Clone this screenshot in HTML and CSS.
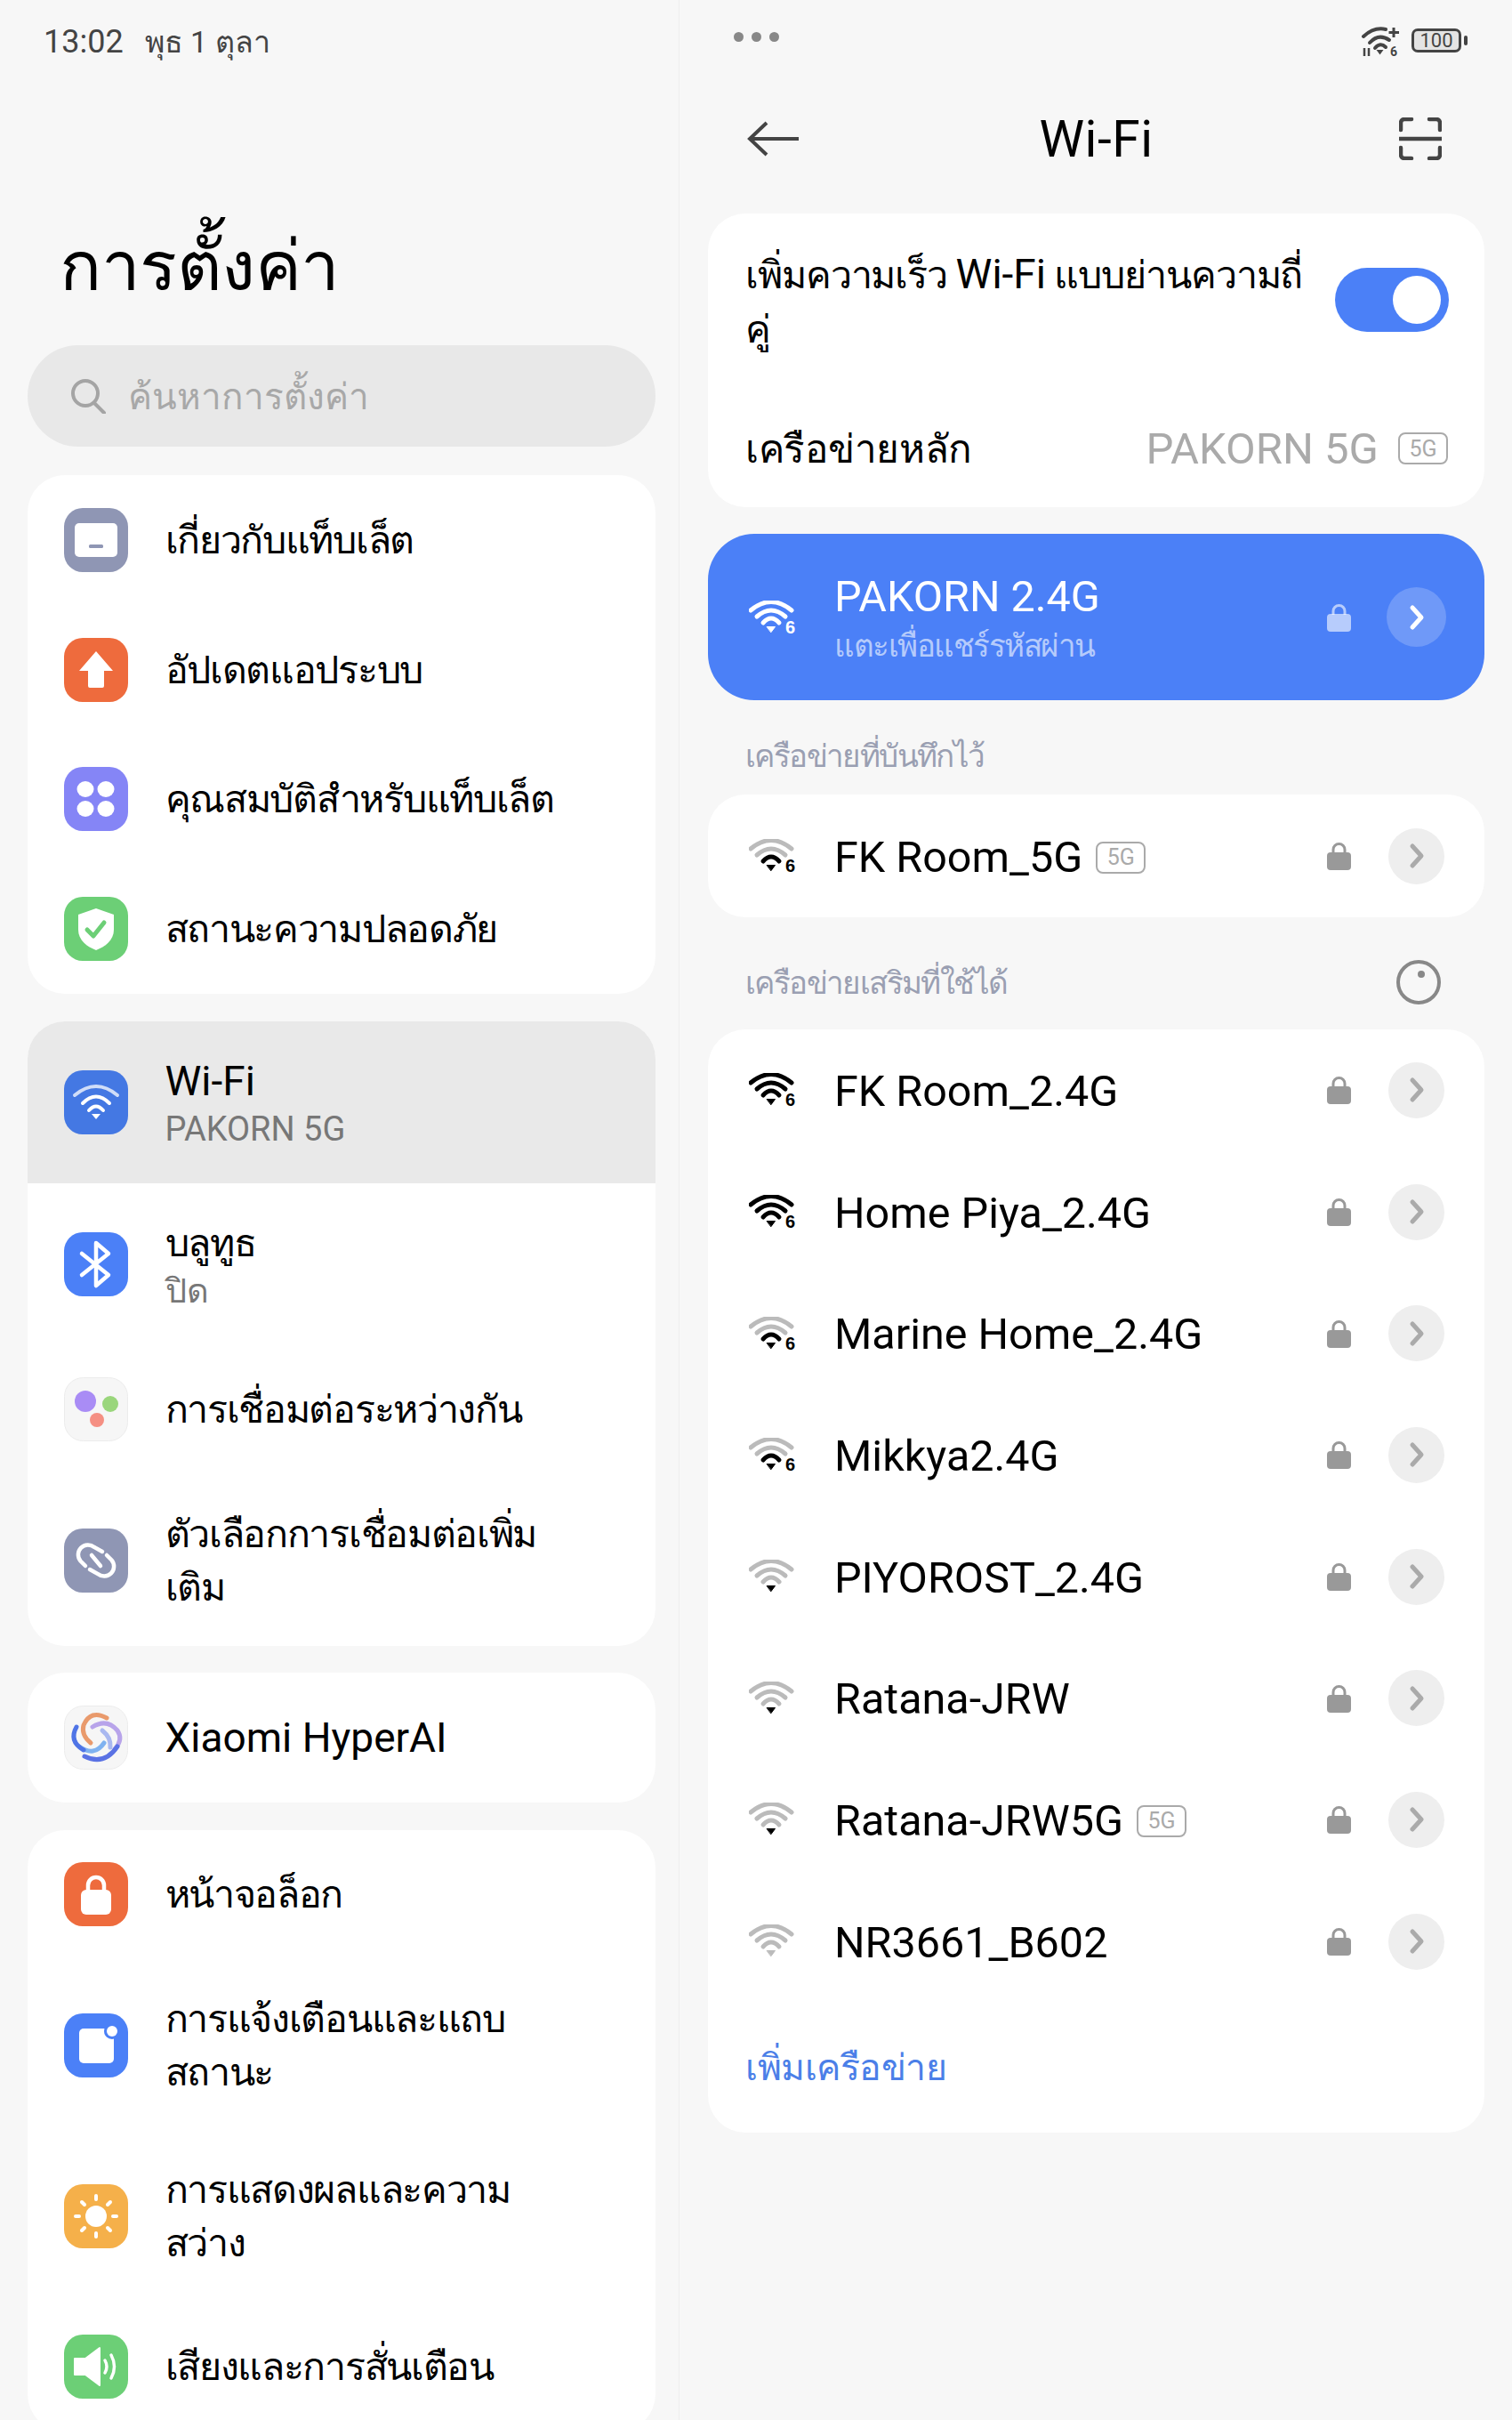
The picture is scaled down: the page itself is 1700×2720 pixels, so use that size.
FILE: index.html
```html
<!DOCTYPE html>
<html lang="th">
<head>
    <meta charset="UTF-8">
    <meta name="viewport" content="width=device-width, initial-scale=1.0">
    <title>การตั้งค่า Wi-Fi</title>
    <link rel="stylesheet" href="styles.css">
</head>
<body>
    <svg class="defs" width="0" height="0">
        <symbol id="wifi" viewBox="0 0 52 38">
            <path class="arc1" d="M2 11Q25-8 48 11"/>
            <path class="arc2" d="M9 18Q25 4 41 18"/>
            <path class="arc3" d="M16 25Q25 15 34 25"/>
            <path class="dot" d="M20.500 29.500H29.500L25 35.500Z"/>
        </symbol>
        <symbol id="lock" viewBox="0 0 27 32">
            <path class="shackle" d="M7 13V9a6.500 6.500 0 0 1 13 0v4"/>
            <rect x="0" y="12" width="27" height="20" rx="4"/>
        </symbol>
        <symbol id="chevron" viewBox="0 0 20 30">
            <path d="M5 4L15 15L5 26"/>
        </symbol>
    </svg>

    <div class="screen">
        <div class="pane-left">
            <div class="status-left"><span class="clock">13:02</span><span>พุธ 1 ตุลา</span></div>
            <h1 class="big-title">การตั้งค่า</h1>
            <div class="search">
                <svg class="search-icon" viewBox="0 0 40 40"><circle cx="17" cy="17" r="14"/><path d="M27 28L38 39"/></svg>
                <span>ค้นหาการตั้งค่า</span>
            </div>

            <div class="card">
                <div class="row">
                    <svg class="app-icon" viewBox="0 0 72 72"><rect width="72" height="72" rx="21" fill="#8f96b4"/><rect x="12" y="17" width="48" height="38" rx="5" fill="#fff"/><rect x="28" y="41" width="16" height="4" rx="1.500" fill="#8f96b4"/></svg>
                    <div class="row-text">เกี่ยวกับแท็บเล็ต</div>
                </div>
                <div class="row">
                    <svg class="app-icon" viewBox="0 0 72 72"><rect width="72" height="72" rx="21" fill="#ee6b3d"/><path d="M36 15L55 37H45V54a2 2 0 0 1-2 2H29a2 2 0 0 1-2-2V37H17Z" fill="#fff"/></svg>
                    <div class="row-text">อัปเดตแอประบบ</div>
                </div>
                <div class="row">
                    <svg class="app-icon" viewBox="0 0 72 72"><rect width="72" height="72" rx="21" fill="#8585f6"/><g fill="#fff"><ellipse cx="24" cy="25" rx="9.500" ry="9"/><ellipse cx="47" cy="25" rx="9.500" ry="9"/><ellipse cx="24" cy="47" rx="9.500" ry="9"/><ellipse cx="47" cy="47" rx="9.500" ry="9"/></g></svg>
                    <div class="row-text">คุณสมบัติสำหรับแท็บเล็ต</div>
                </div>
                <div class="row">
                    <svg class="app-icon" viewBox="0 0 72 72"><rect width="72" height="72" rx="21" fill="#6ccf76"/><path d="M36 13L56 20V37C56 49 46 56 36 60C26 56 16 49 16 37V20Z" fill="#fff"/><path d="M26 37L33 44L45 29" fill="none" stroke="#6ccf76" stroke-width="5" stroke-linecap="round" stroke-linejoin="round"/></svg>
                    <div class="row-text">สถานะความปลอดภัย</div>
                </div>
            </div>

            <div class="card">
                <div class="row row-active">
                    <svg class="app-icon" viewBox="0 0 72 72"><rect width="72" height="72" rx="21" fill="#4478e3"/><g fill="none" stroke="#fff" stroke-width="4" stroke-linecap="round"><path d="M12 28Q36 8 60 28" opacity=".75"/><path d="M21 37Q36 22 51 37"/><path d="M28 45Q36 36 44 45"/></g><path d="M31 49H41L36 55Z" fill="#fff"/></svg>
                    <div>
                        <div class="row-text latin">Wi-Fi</div>
                        <div class="row-sub">PAKORN 5G</div>
                    </div>
                </div>
                <div class="row row-double">
                    <svg class="app-icon" viewBox="0 0 72 72"><rect width="72" height="72" rx="21" fill="#4b80f7"/><path d="M20 24L50 48L36 60V12L50 24L20 48" fill="none" stroke="#fff" stroke-width="4.500" stroke-linejoin="round" stroke-linecap="round"/></svg>
                    <div>
                        <div class="row-text">บลูทูธ</div>
                        <div class="row-sub">ปิด</div>
                    </div>
                </div>
                <div class="row">
                    <svg class="app-icon" viewBox="0 0 72 72"><rect x=".5" y=".5" width="71" height="71" rx="21" fill="#f6f6f6" stroke="#ececec"/><circle cx="24" cy="27" r="12" fill="#a98cf5"/><circle cx="52" cy="30" r="9" fill="#9ad67c"/><circle cx="37" cy="48" r="8" fill="#f58f83"/></svg>
                    <div class="row-text">การเชื่อมต่อระหว่างกัน</div>
                </div>
                <div class="row row-tall">
                    <svg class="app-icon" viewBox="0 0 72 72"><rect width="72" height="72" rx="21" fill="#8f96b4"/><g fill="none" stroke="#fff" stroke-width="4.500" stroke-linecap="round"><path d="M24 42L18.500 36.500A11 11 0 0 1 34 21L43 26"/><path d="M48 30L53.500 35.500A11 11 0 0 1 38 51L29 46"/><path d="M31 30L41 42"/></g></svg>
                    <div class="row-text">ตัวเลือกการเชื่อมต่อเพิ่ม<br>เติม</div>
                </div>
            </div>

            <div class="card">
                <div class="row">
                    <svg class="app-icon" viewBox="0 0 72 72"><rect x=".5" y=".5" width="71" height="71" rx="21" fill="#f6f6f6" stroke="#ececec"/><g fill="none" stroke-width="5" stroke-linecap="round"><path d="M48 14Q30 4 22 22Q19 33 30 42" stroke="#e99a6c"/><path d="M32 24Q48 14 60 28Q67 38 57 49" stroke="#b8a4ea"/><path d="M43 28Q53 36 52 47" stroke="#a9b8f0"/><path d="M45 42Q34 58 17 46" stroke="#7fb2f0"/><path d="M14 24Q5 40 22 50" stroke="#4f74e6"/><path d="M23 57Q45 68 60 46" stroke="#5a72e4"/></g></svg>
                    <div class="row-text latin">Xiaomi HyperAI</div>
                </div>
            </div>

            <div class="card">
                <div class="row">
                    <svg class="app-icon" viewBox="0 0 72 72"><rect width="72" height="72" rx="21" fill="#ee6b3d"/><path d="M27 33V26a9 9 0 0 1 18 0v7" fill="none" stroke="#fff" stroke-width="4.500"/><rect x="19" y="31" width="34" height="28" rx="6" fill="#fff"/></svg>
                    <div class="row-text">หน้าจอล็อก</div>
                </div>
                <div class="row row-tall">
                    <svg class="app-icon" viewBox="0 0 72 72"><rect width="72" height="72" rx="21" fill="#4b80f7"/><rect x="17" y="17" width="39" height="39" rx="5" fill="#fff"/><circle cx="54" cy="20" r="9" fill="#4b80f7"/><circle cx="54" cy="20" r="6" fill="#fff"/></svg>
                    <div class="row-text">การแจ้งเตือนและแถบ<br>สถานะ</div>
                </div>
                <div class="row row-tall">
                    <svg class="app-icon" viewBox="0 0 72 72"><rect width="72" height="72" rx="21" fill="#f5b04a"/><circle cx="36" cy="36" r="12" fill="#fff"/><g stroke="#fff" stroke-width="4" stroke-linecap="round"><path d="M36 13V17"/><path d="M36 55V59"/><path d="M13 36H17"/><path d="M55 36H59"/><path d="M20 20L23 23"/><path d="M49 49L52 52"/><path d="M20 52L23 49"/><path d="M49 23L52 20"/></g></svg>
                    <div class="row-text">การแสดงผลและความ<br>สว่าง</div>
                </div>
                <div class="row">
                    <svg class="app-icon" viewBox="0 0 72 72"><rect width="72" height="72" rx="21" fill="#6ccf76"/><path d="M12 27H24L40 15V57L24 45H12Z" fill="#fff" stroke="#fff" stroke-width="2" stroke-linejoin="round"/><g fill="none" stroke="#fff" stroke-width="3.500" stroke-linecap="round"><path d="M46 29Q50 36 46 43"/><path d="M53 23Q60 36 53 49"/></g></svg>
                    <div class="row-text">เสียงและการสั่นเตือน</div>
                </div>
            </div>
        </div>

        <div class="pane-right">
            <div class="status-right">
                <div class="dots"><i></i><i></i><i></i></div>
                <div class="status-icons">
                    <svg class="status-wifi" viewBox="0 0 46 34">
                        <g fill="none" stroke="#444" stroke-width="4" stroke-linecap="round"><path d="M3 11Q15 0 28 3"/><path d="M10 18Q20 7 32 15"/><path d="M16 24Q22 17 28 23"/></g>
                        <path d="M17.500 26H25.500L21.500 31.500Z" fill="#444"/>
                        <path d="M37 1V12M31.500 6.500H43" stroke="#444" stroke-width="3"/>
                        <path d="M4 24V33M9 24V33" stroke="#444" stroke-width="2.500"/>
                        <text x="33" y="33" class="status-six">6</text>
                    </svg>
                    <div class="battery"><span>100</span></div>
                </div>
            </div>
            <div class="toolbar">
                <svg class="back-icon" viewBox="0 0 58 40"><path d="M22 2L3 20L22 38M3 20H58"/></svg>
                <div class="toolbar-title">Wi-Fi</div>
                <svg class="scan-icon" viewBox="0 0 48 48"><path d="M2 14V6a4 4 0 0 1 4-4H14M34 2H42a4 4 0 0 1 4 4V14M2 34V42a4 4 0 0 0 4 4H14M34 46H42a4 4 0 0 0 4-4V34"/><path d="M0 24H48"/></svg>
            </div>

            <div class="panel">
                <div class="speed-row">
                    <div class="speed-text">เพิ่มความเร็ว <span class="latin">Wi-Fi</span> แบบย่านความถี่<br>คู่</div>
                    <div class="toggle"><i></i></div>
                </div>
                <div class="main-net">
                    <span>เครือข่ายหลัก</span>
                    <span class="main-net-value">PAKORN 5G<b class="tag tag-main">5G</b></span>
                </div>
            </div>

            <div class="net net-current">
                <svg class="wifi-icon sig-white"><use href="#wifi"/><text x="41" y="37">6</text></svg>
                <div class="net-body">
                    <div class="net-name">PAKORN 2.4G</div>
                    <div class="net-sub">แตะเพื่อแชร์รหัสผ่าน</div>
                </div>
                <svg class="lock-icon"><use href="#lock"/></svg>
                <span class="go"><svg><use href="#chevron"/></svg></span>
            </div>

            <div class="section-label section-saved">เครือข่ายที่บันทึกไว้</div>
            <div class="panel">
                <div class="net net-saved">
                    <svg class="wifi-icon sig-2"><use href="#wifi"/><text x="41" y="37">6</text></svg>
                    <div class="net-name">FK Room_5G<b class="tag">5G</b></div>
                    <svg class="lock-icon"><use href="#lock"/></svg>
                    <span class="go"><svg><use href="#chevron"/></svg></span>
                </div>
            </div>

            <div class="section-label section-more">
                <span>เครือข่ายเสริมที่ใช้ได้</span>
                <svg class="refresh-icon" viewBox="0 0 50 50"><circle cx="25" cy="25" r="23"/><circle class="refresh-dot" cx="28" cy="16" r="4"/></svg>
            </div>
            <div class="panel">
                <div class="net">
                    <svg class="wifi-icon sig-4"><use href="#wifi"/><text x="41" y="37">6</text></svg>
                    <div class="net-name">FK Room_2.4G</div>
                    <svg class="lock-icon"><use href="#lock"/></svg>
                    <span class="go"><svg><use href="#chevron"/></svg></span>
                </div>
                <div class="net">
                    <svg class="wifi-icon sig-4"><use href="#wifi"/><text x="41" y="37">6</text></svg>
                    <div class="net-name">Home Piya_2.4G</div>
                    <svg class="lock-icon"><use href="#lock"/></svg>
                    <span class="go"><svg><use href="#chevron"/></svg></span>
                </div>
                <div class="net">
                    <svg class="wifi-icon sig-2"><use href="#wifi"/><text x="41" y="37">6</text></svg>
                    <div class="net-name">Marine Home_2.4G</div>
                    <svg class="lock-icon"><use href="#lock"/></svg>
                    <span class="go"><svg><use href="#chevron"/></svg></span>
                </div>
                <div class="net">
                    <svg class="wifi-icon sig-2"><use href="#wifi"/><text x="41" y="37">6</text></svg>
                    <div class="net-name">Mikkya2.4G</div>
                    <svg class="lock-icon"><use href="#lock"/></svg>
                    <span class="go"><svg><use href="#chevron"/></svg></span>
                </div>
                <div class="net">
                    <svg class="wifi-icon sig-1"><use href="#wifi"/></svg>
                    <div class="net-name">PIYOROST_2.4G</div>
                    <svg class="lock-icon"><use href="#lock"/></svg>
                    <span class="go"><svg><use href="#chevron"/></svg></span>
                </div>
                <div class="net">
                    <svg class="wifi-icon sig-1"><use href="#wifi"/></svg>
                    <div class="net-name">Ratana-JRW</div>
                    <svg class="lock-icon"><use href="#lock"/></svg>
                    <span class="go"><svg><use href="#chevron"/></svg></span>
                </div>
                <div class="net">
                    <svg class="wifi-icon sig-1"><use href="#wifi"/></svg>
                    <div class="net-name">Ratana-JRW5G<b class="tag">5G</b></div>
                    <svg class="lock-icon"><use href="#lock"/></svg>
                    <span class="go"><svg><use href="#chevron"/></svg></span>
                </div>
                <div class="net">
                    <svg class="wifi-icon sig-0"><use href="#wifi"/></svg>
                    <div class="net-name">NR3661_B602</div>
                    <svg class="lock-icon"><use href="#lock"/></svg>
                    <span class="go"><svg><use href="#chevron"/></svg></span>
                </div>
                <div class="add-net">เพิ่มเครือข่าย</div>
            </div>
        </div>
    </div>
</body>
</html>
```

FILE: styles.css
```css
* {
    box-sizing: border-box;
}
html, body {
    margin: 0;
    padding: 0;
}
body {
    width: 1700px;
    height: 2720px;
    overflow: hidden;
    background-color: #f7f7f7;
    color: #000;
    font-family: Roboto, "Noto Sans", "Noto Sans CJK SC", sans-serif;
}
.defs {
    position: absolute;
}
.screen {
    display: flex;
    height: 2720px;
}

/* left pane */
.pane-left {
    width: 764px;
    padding: 0 26px 0 31px;
    border-right: 1px solid #eeeeee;
    flex-shrink: 0;
}
.status-left {
    display: flex;
    align-items: center;
    gap: 24px;
    height: 94px;
    padding-left: 18px;
    color: #444;
    font-size: 34px;
}
.clock {
    font-size: 36px;
}
.big-title {
    margin: 156px 0 38px 36px;
    height: 100px;
    font-size: 78px;
    line-height: 100px;
    font-weight: 400;
    letter-spacing: -0.5px;
}
.search {
    display: flex;
    align-items: center;
    gap: 25px;
    height: 114px;
    padding-left: 48px;
    margin-bottom: 32px;
    border-radius: 57px;
    background-color: #e8e8e8;
    color: #a8a8a8;
    font-size: 40.500px;
}
.search-icon {
    width: 40px;
    height: 40px;
    fill: none;
    stroke: #a4a4a4;
    stroke-width: 4;
    stroke-linecap: round;
}
.card {
    margin-bottom: 30.500px;
    border-radius: 42px;
    background-color: #fff;
    overflow: hidden;
}
.row {
    display: flex;
    align-items: center;
    gap: 41.500px;
    height: 145.750px;
    padding-left: 41px;
}
.row-active {
    height: 182px;
    background-color: #e9e9e9;
}
.row-double {
    height: 182px;
}
.row-tall {
    height: 192.500px;
}
.app-icon {
    width: 72px;
    height: 72px;
    flex-shrink: 0;
}
.row-text {
    font-size: 43px;
    line-height: 60px;
    letter-spacing: -1.300px;
}
.row-sub {
    color: #777;
    font-size: 38px;
    line-height: 48px;
}

/* right pane */
.pane-right {
    flex: 1;
    padding: 0 31px 0 32px;
}
.status-right {
    display: flex;
    justify-content: space-between;
    height: 106px;
    padding: 36px 26px 0 29px;
}
.dots {
    display: flex;
    gap: 9px;
}
.dots i {
    width: 11px;
    height: 11px;
    border-radius: 50%;
    background-color: #888;
}
.status-icons {
    display: flex;
    gap: 11px;
    height: 34px;
    margin-top: -6px;
}
.status-wifi {
    width: 46px;
    height: 34px;
}
.status-six {
    font-size: 14px;
    font-weight: 700;
    fill: #444;
}
.battery {
    display: flex;
    align-items: center;
    justify-content: center;
    width: 56px;
    height: 27px;
    margin-top: 2px;
    border: 3px solid #444;
    border-radius: 7px;
    background-color: #e4e4e4;
    color: #444;
    font-size: 22px;
    position: relative;
}
.battery::after {
    content: "";
    position: absolute;
    right: -10px;
    top: 5px;
    width: 4px;
    height: 11px;
    border-radius: 2px;
    background-color: #444;
}
.toolbar {
    display: flex;
    align-items: center;
    justify-content: space-between;
    height: 100px;
    margin-bottom: 34px;
    padding: 0 48px 0 44px;
    position: relative;
}
.toolbar-title {
    position: absolute;
    left: 0;
    right: 0;
    text-align: center;
    font-size: 57px;
    letter-spacing: 0.5px;
}
.back-icon {
    width: 58px;
    height: 40px;
    fill: none;
    stroke: #444;
    stroke-width: 4;
}
.scan-icon {
    width: 48px;
    height: 48px;
    fill: none;
    stroke: #444;
    stroke-width: 4.500;
    stroke-linecap: round;
}
.panel {
    border-radius: 42px;
    background-color: #fff;
    overflow: hidden;
}
.speed-row {
    display: flex;
    justify-content: space-between;
    align-items: center;
    height: 198px;
    padding: 0 40px 0 42px;
}
.speed-text {
    flex: 1;
    font-size: 43px;
    line-height: 61px;
    letter-spacing: -1.100px;
    white-space: nowrap;
}
.toggle {
    display: flex;
    justify-content: flex-end;
    align-items: center;
    flex-shrink: 0;
    width: 128px;
    height: 72px;
    margin-top: -4px;
    padding-right: 9px;
    border-radius: 36px;
    background-color: #4b80f7;
}
.toggle i {
    width: 54px;
    height: 54px;
    border-radius: 50%;
    background-color: #fff;
}
.main-net {
    display: flex;
    justify-content: space-between;
    align-items: center;
    height: 132px;
    padding: 0 41px 0 42px;
    font-size: 44px;
    letter-spacing: -0.300px;
}
.main-net-value {
    display: flex;
    align-items: center;
    color: #aaa;
    font-size: 49px;
    letter-spacing: 0;
}
.tag {
    display: inline-flex;
    align-items: center;
    justify-content: center;
    width: 56px;
    height: 36px;
    margin-left: 15px;
    border: 2px solid #aaa;
    border-radius: 8px;
    color: #aaa;
    font-size: 25px;
    font-weight: 400;
}
.tag-main {
    margin-left: 22px;
}
.net {
    display: flex;
    align-items: center;
    height: 136.700px;
    padding: 0 45px 0 46px;
}
.wifi-icon {
    width: 52px;
    height: 38px;
    flex-shrink: 0;
    margin-right: 44px;
    overflow: visible;
}
.wifi-icon text {
    font-family: "Liberation Sans", sans-serif;
    font-size: 20px;
    font-weight: 700;
    fill: #000;
}
#wifi path {
    fill: none;
    stroke-width: 5;
    stroke-linecap: round;
}
#wifi .arc1 {
    stroke: var(--arc1);
}
#wifi .arc2 {
    stroke: var(--arc2);
}
#wifi .arc3 {
    stroke: var(--arc3);
}
#wifi .dot {
    fill: var(--dot);
    stroke: var(--dot);
    stroke-width: 1;
}
.sig-4 {
    --arc1: #000;
    --arc2: #000;
    --arc3: #000;
    --dot: #000;
}
.sig-2 {
    --arc1: #bbb;
    --arc2: #bbb;
    --arc3: #000;
    --dot: #000;
}
.sig-1 {
    --arc1: #bbb;
    --arc2: #bbb;
    --arc3: #bbb;
    --dot: #000;
}
.sig-0 {
    --arc1: #bbb;
    --arc2: #bbb;
    --arc3: #bbb;
    --dot: #bbb;
}
.sig-white {
    --arc1: #fff;
    --arc2: #fff;
    --arc3: #fff;
    --dot: #fff;
}
.sig-white text {
    fill: #fff;
}
.net-name {
    display: flex;
    align-items: center;
    flex: 1;
    padding-top: 3px;
    font-size: 48.500px;
    line-height: 60px;
}
.lock-icon {
    width: 27px;
    height: 32px;
    margin-right: 42px;
    flex-shrink: 0;
    fill: #999;
    color: #999;
}
#lock .shackle {
    fill: none;
    stroke: currentColor;
    stroke-width: 3;
}
.go {
    display: flex;
    align-items: center;
    justify-content: center;
    width: 63px;
    height: 63px;
    border-radius: 50%;
    background-color: #eee;
    flex-shrink: 0;
}
.go svg {
    width: 20px;
    height: 30px;
    fill: none;
    stroke: #aaa;
    stroke-width: 5;
    stroke-linecap: round;
    stroke-linejoin: round;
}
.net-current {
    height: 187px;
    margin-top: 30px;
    border-radius: 52px;
    background-color: #4b80f7;
    color: #fff;
}
.net-body {
    flex: 1;
    padding-top: 4px;
}
.net-sub {
    color: rgba(255, 255, 255, 0.6);
    font-size: 35px;
    line-height: 52px;
    letter-spacing: -1.500px;
}
.net-current .lock-icon {
    margin-right: 40px;
    fill: rgba(255, 255, 255, 0.6);
    color: rgba(255, 255, 255, 0.6);
}
.net-current .go {
    width: 67px;
    height: 67px;
    margin-right: -2px;
    background-color: rgba(255, 255, 255, 0.2);
}
.net-current .go svg {
    stroke: #fff;
}
.net-saved {
    height: 138px;
}
.section-label {
    display: flex;
    justify-content: space-between;
    align-items: center;
    height: 48px;
    padding: 0 49px 0 42px;
    color: #9a9fb2;
    font-size: 35px;
    letter-spacing: -1.600px;
}
.section-saved {
    margin: 38px 0 20px;
}
.section-more {
    margin: 49px 0 29px;
}
.refresh-icon {
    width: 50px;
    height: 50px;
    fill: none;
    stroke: #888;
    stroke-width: 4;
}
.refresh-dot {
    fill: #888;
    stroke: none;
}
.add-net {
    display: flex;
    align-items: center;
    height: 146px;
    padding-left: 42px;
    color: #4b7fe8;
    font-size: 41px;
    letter-spacing: -0.500px;
}
.latin {
    font-size: 46px;
    letter-spacing: 0;
}
```
